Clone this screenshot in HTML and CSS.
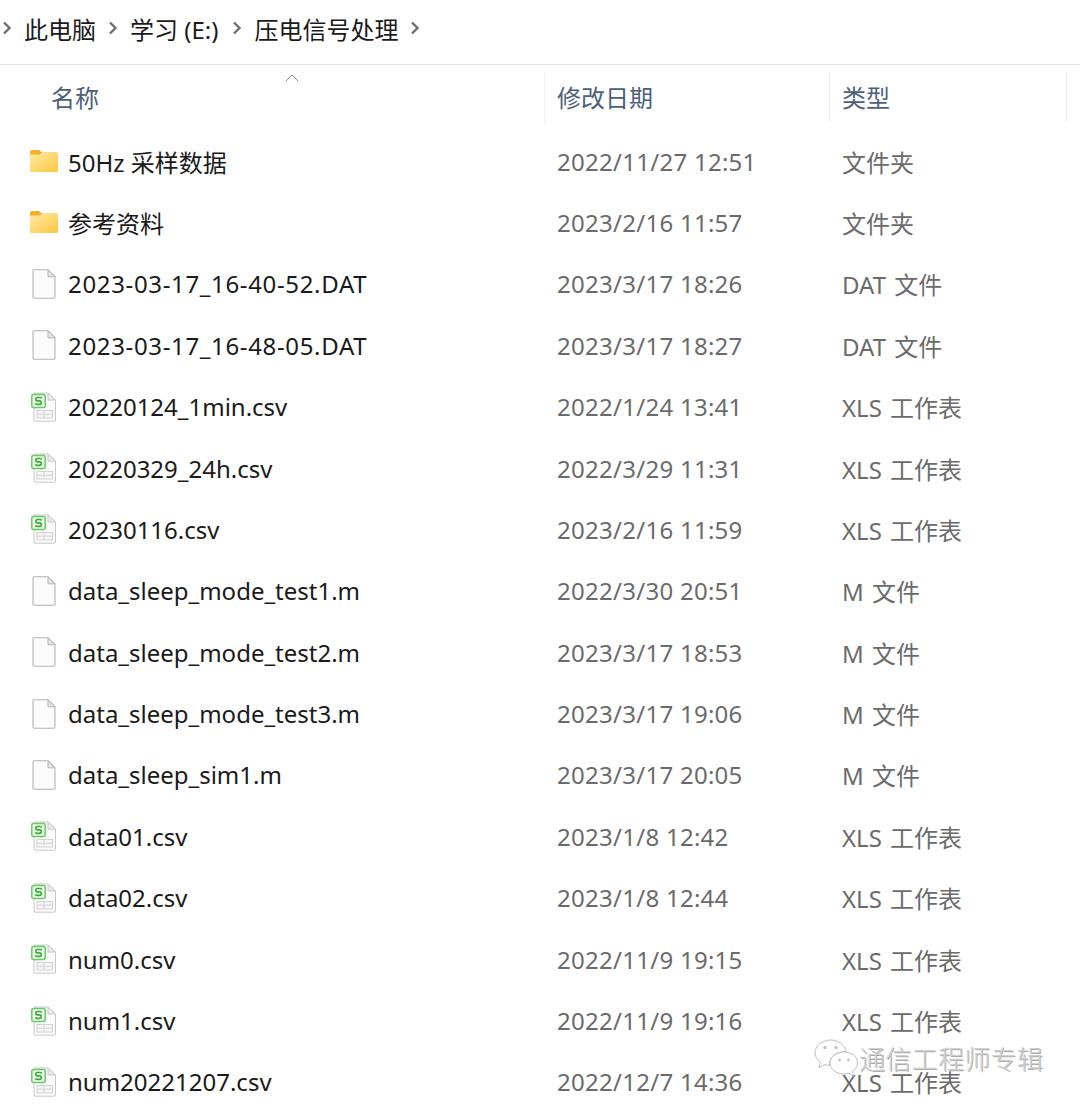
FILE: index.html
```html
<!DOCTYPE html>
<html lang="zh-CN">

<head>
    <meta charset="UTF-8">
    <title>压电信号处理</title>
    <link rel="stylesheet" href="styles.css">
</head>

<body>
    <svg class="defs" width="0" height="0">
        <symbol id="chev" viewBox="0 0 10 16">
            <path d="M2 2.5 L7.5 8 L2 13.5" fill="none" stroke="#6f6f6f" stroke-width="2.4" />
        </symbol>
        <symbol id="folder" viewBox="0 0 30 24">
            <defs>
                <linearGradient id="fg" x1="0" y1="0" x2="1" y2="1">
                    <stop offset="0" stop-color="#ffeaa6" />
                    <stop offset="1" stop-color="#fcc73f" />
                </linearGradient>
            </defs>
            <path d="M1 3 Q1 1 3 1 H10 L13 3.5 H28 V8 H1 Z" fill="#f2b02c" />
            <path d="M1 5.5 H11 L13.5 3.5 H28 Q29 3.5 29 4.5 V22 Q29 23 28 23 H2 Q1 23 1 22 Z" fill="url(#fg)" />
        </symbol>
        <symbol id="file" viewBox="0 0 24 30">
            <path d="M1.5 0.8 H16 L23 7.8 V28 Q23 29.2 21.8 29.2 H2.2 Q1 29.2 1 28 V1.5 Z" fill="#fcfcfc" stroke="#b4b4b4" stroke-width="1.1" />
            <path d="M16 0.8 V7.8 H23 Z" fill="#e6e6e6" stroke="#b4b4b4" stroke-width="1" />
        </symbol>
        <symbol id="sheet" viewBox="0 0 26 30">
            <path d="M3 1 H17 L24.5 8 V28 Q24.5 29.2 23.3 29.2 H4.2 Q3 29.2 3 28 Z" fill="#fbfbfb" stroke="#c8c8c8" stroke-width="1" />
            <path d="M17 1 V8 H24.5 Z" fill="#ececec" stroke="#c8c8c8" stroke-width="1" />
            <rect x="6" y="18.5" width="15.5" height="7.5" fill="#f5f5f5" stroke="#d4d4d4" stroke-width="1" />
            <path d="M6 22.2 H21.5 M13 18.5 V26" stroke="#d4d4d4" stroke-width="1" />
            <rect x="0.8" y="2.5" width="13.4" height="13" rx="1.6" fill="#eaf8e8" stroke="#6cc868" stroke-width="1.5" />
            <path d="M10.800 6.300 Q10 5.500 8.500 5.500 H6.500 Q4.800 5.500 4.800 7.200 Q4.800 8.900 6.500 8.900 H8.500 Q10.300 8.900 10.300 10.600 Q10.300 12.400 8.500 12.400 H6.500 Q5 12.400 4.200 11.500" fill="none" stroke="#3daa3a" stroke-width="1.600" />
        </symbol>
        <symbol id="wechat" viewBox="0 0 44 40">
            <path d="M17 2 C8 2 1 8 1 15 C1 19 3.500 22 6.500 24.500 L5 29.500 L11 26.500 C12.500 27 14 27.300 15.500 27.400 C15 19 21 14 32.500 13.500 C30.500 7 24.500 2 17 2 Z" fill="#fff" fill-opacity="0.85" stroke="#bdbdbd" stroke-width="1" />
            <path d="M30 14 C22 14 16 19 16 25 C16 31 22 36 30 36 C32 36 33.500 35.700 35 35.200 L39.500 38 L38.500 33.500 C41.500 31.500 43.500 28.500 43.500 25 C43.500 19 38 14 30 14 Z" fill="#fff" fill-opacity="0.85" stroke="#bdbdbd" stroke-width="1" />
            <circle cx="11" cy="9.500" r="1.700" fill="#c4c4c4" />
            <circle cx="22" cy="9.500" r="1.700" fill="#c4c4c4" />
            <circle cx="25.500" cy="22" r="1.400" fill="#c4c4c4" />
            <circle cx="34.500" cy="22" r="1.400" fill="#c4c4c4" />
        </symbol>
    </svg>

    <!-- Breadcrumb -->
    <nav class="crumbs">
        <svg class="chev first"><use href="#chev" /></svg>
        <span>此电脑</span>
        <svg class="chev"><use href="#chev" /></svg>
        <span class="drive">学习 (E:)</span>
        <svg class="chev"><use href="#chev" /></svg>
        <span>压电信号处理</span>
        <svg class="chev"><use href="#chev" /></svg>
    </nav>

    <!-- Column headers -->
    <div class="head row-grid">
        <div class="col col-name">名称
            <svg class="sort" viewBox="0 0 14 8"><path d="M1 7 L7 1 L13 7" fill="none" stroke="#8a8a8a" stroke-width="1" /></svg>
        </div>
        <div class="col col-date">修改日期</div>
        <div class="col col-type">类型</div>
    </div>

    <!-- File list -->
    <div class="list">
        <div class="row row-grid"><div class="name"><svg class="ico"><use href="#folder" /></svg>50Hz 采样数据</div><div class="date">2022/11/27 12:51</div><div class="type">文件夹</div></div>
        <div class="row row-grid"><div class="name"><svg class="ico"><use href="#folder" /></svg>参考资料</div><div class="date">2023/2/16 11:57</div><div class="type">文件夹</div></div>
        <div class="row row-grid"><div class="name wide"><svg class="ico"><use href="#file" /></svg>2023-03-17_16-40-52.DAT</div><div class="date">2023/3/17 18:26</div><div class="type">DAT 文件</div></div>
        <div class="row row-grid"><div class="name wide"><svg class="ico"><use href="#file" /></svg>2023-03-17_16-48-05.DAT</div><div class="date">2023/3/17 18:27</div><div class="type">DAT 文件</div></div>
        <div class="row row-grid"><div class="name"><svg class="ico"><use href="#sheet" /></svg>20220124_1min.csv</div><div class="date">2022/1/24 13:41</div><div class="type">XLS 工作表</div></div>
        <div class="row row-grid"><div class="name"><svg class="ico"><use href="#sheet" /></svg>20220329_24h.csv</div><div class="date">2022/3/29 11:31</div><div class="type">XLS 工作表</div></div>
        <div class="row row-grid"><div class="name"><svg class="ico"><use href="#sheet" /></svg>20230116.csv</div><div class="date">2023/2/16 11:59</div><div class="type">XLS 工作表</div></div>
        <div class="row row-grid"><div class="name"><svg class="ico"><use href="#file" /></svg>data_sleep_mode_test1.m</div><div class="date">2022/3/30 20:51</div><div class="type">M 文件</div></div>
        <div class="row row-grid"><div class="name"><svg class="ico"><use href="#file" /></svg>data_sleep_mode_test2.m</div><div class="date">2023/3/17 18:53</div><div class="type">M 文件</div></div>
        <div class="row row-grid"><div class="name"><svg class="ico"><use href="#file" /></svg>data_sleep_mode_test3.m</div><div class="date">2023/3/17 19:06</div><div class="type">M 文件</div></div>
        <div class="row row-grid"><div class="name"><svg class="ico"><use href="#file" /></svg>data_sleep_sim1.m</div><div class="date">2023/3/17 20:05</div><div class="type">M 文件</div></div>
        <div class="row row-grid"><div class="name"><svg class="ico"><use href="#sheet" /></svg>data01.csv</div><div class="date">2023/1/8 12:42</div><div class="type">XLS 工作表</div></div>
        <div class="row row-grid"><div class="name"><svg class="ico"><use href="#sheet" /></svg>data02.csv</div><div class="date">2023/1/8 12:44</div><div class="type">XLS 工作表</div></div>
        <div class="row row-grid"><div class="name"><svg class="ico"><use href="#sheet" /></svg>num0.csv</div><div class="date">2022/11/9 19:15</div><div class="type">XLS 工作表</div></div>
        <div class="row row-grid"><div class="name"><svg class="ico"><use href="#sheet" /></svg>num1.csv</div><div class="date">2022/11/9 19:16</div><div class="type">XLS 工作表</div></div>
        <div class="row row-grid"><div class="name"><svg class="ico"><use href="#sheet" /></svg>num20221207.csv</div><div class="date">2022/12/7 14:36</div><div class="type">XLS 工作表</div></div>
    </div>

    <!-- Watermark -->
    <div class="watermark">
        <svg class="wm-icon"><use href="#wechat" /></svg>
        <span>通信工程师专辑</span>
    </div>
</body>

</html>
```

FILE: styles.css
```css
body {
    font-family: 'Noto Sans', 'Noto Sans CJK SC', sans-serif;
    font-size: 24px;
    background-color: white;
    color: #1a1a1a;
    margin: 0;
    padding: 0;
    height: 1108px;
    overflow: hidden;
    position: relative;
}

.defs {
    display: block;
    height: 0;
}

/* Breadcrumb */
.crumbs {
    height: 56px;
    border-bottom: 1px solid #e5e5e5;
    display: flex;
    align-items: center;
    padding-left: 2px;
    padding-bottom: 8px;
}

.chev {
    width: 10px;
    height: 16px;
    margin: 0 12px;
}

.chev.first {
    margin: 0 12px 0 0;
}

.drive {
    margin-right: 2px;
}

/* Shared columns */
.row-grid {
    display: grid;
    grid-template-columns: 544px 285px 238px;
}

.head {
    height: 50px;
    margin-top: 7px;
    color: #4c607a;
}

.col {
    display: flex;
    align-items: center;
    padding-left: 12px;
    padding-bottom: 2px;
    box-sizing: border-box;
    border-left: 1px solid #eeeeee;
    position: relative;
}

.col-name {
    padding-left: 51px;
    border-left: none;
}

.col-type {
    border-right: 1px solid #eeeeee;
}

.sort {
    position: absolute;
    left: 285px;
    top: 2px;
    width: 14px;
    height: 8px;
}

/* File rows */
.list {
    margin-top: 8.4px;
}

.row {
    height: 61.4px;
    align-items: center;
}

.name {
    display: flex;
    align-items: center;
    padding-left: 29px;
}

.name.wide {
    letter-spacing: 0.65px;
}

.ico {
    width: 30px;
    height: 30px;
    margin-right: 9px;
    flex-shrink: 0;
}

.date,
.type {
    color: #6b6b6b;
    padding-left: 13px;
}

.date {
    letter-spacing: 0.27px;
}

.type {
    word-spacing: 2px;
}

/* Watermark sits on top of the last rows */
.watermark {
    position: absolute;
    left: 813px;
    top: 1038px;
    display: flex;
    align-items: center;
    color: #d0d0d0;
    font-size: 26px;
    font-weight: 300;
    letter-spacing: 0.3px;
    text-shadow: 1px 1px 0 rgba(90, 90, 90, 0.5);
}

.wm-icon {
    width: 46px;
    height: 40px;
}
```
